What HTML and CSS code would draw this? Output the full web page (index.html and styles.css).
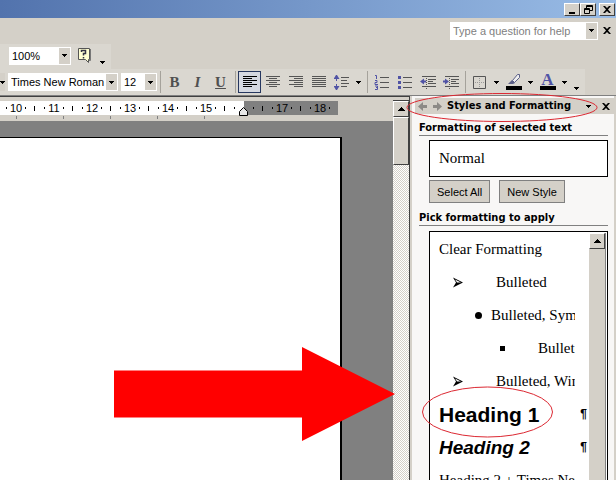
FILE: index.html
```html
<!DOCTYPE html>
<html lang="en">
<head>
<meta charset="utf-8">
<title>Styles and Formatting</title>
<link rel="stylesheet" href="styles.css">
</head>
<body>
<svg class="defs" aria-hidden="true">
  <symbol id="down" viewBox="0 0 5 3"><path d="M0 0h5v1h-1v1h-1v1h-1v-1h-1v-1h-1z"/></symbol>
  <symbol id="up" viewBox="0 0 7 4"><path d="M3 0h1v1h1v1h1v1h1v1H0V3h1V2h1V1h1z"/></symbol>
  <symbol id="close" viewBox="0 0 8 7"><path d="M0 0h2l2 2 2-2h2L5 3.500l3 3.500H6L4 5 2 7H0l3-3.500z"/></symbol>
  <symbol id="arrowhead" viewBox="0 0 10 10"><path d="M0 0l10 5L0 10l3-5z"/><path d="M2 2l6 3H4z" fill="#fff"/></symbol>
</svg>

<header class="titlebar">
  <button class="winbtn" aria-label="Minimize"><svg width="9" height="8"><path d="M1 6h6v2H1z"/></svg></button>
  <button class="winbtn" aria-label="Restore"><svg width="9" height="9" fill="none" stroke="#000"><path d="M2.500 3V.5h6v5H6M2 1.500h7M.5 3.500h5v5h-5zM0 4.500h6"/></svg></button>
  <button class="winbtn last" aria-label="Close"><svg width="8" height="7"><use href="#close"/></svg></button>
</header>

<div class="menubar">
  <div class="combo question"><input type="text" aria-label="Help question" placeholder="Type a question for help"><span class="drop"><svg width="5" height="3"><use href="#down"/></svg></span></div>
  <button class="plain" aria-label="Close document"><svg width="8" height="7"><use href="#close"/></svg></button>
</div>

<div class="bar standard">
  <div class="combo zoom"><select aria-label="Zoom"><option>100%</option></select><span class="drop"><svg width="5" height="3"><use href="#down"/></svg></span></div>
  <button class="tool" aria-label="Help"><svg width="15" height="17"><path d="M1.500 1.500h11v11h-1v3l-3-3h-7z" fill="#ffffd2" stroke="#555"/><path d="M13.500 2v11.500H12" fill="none" stroke="#777"/><path d="M4.500 5V3.500h4v3h-2v2M6.500 10v1.500" fill="none" stroke="#334" stroke-width="1.500"/></svg></button>
  <button class="options" aria-label="Toolbar options"><svg width="5" height="3"><use href="#down"/></svg></button>
</div>

<div class="bar format">
  <button class="edge" aria-label="Style"><svg width="5" height="3"><use href="#down"/></svg></button>
  <div class="combo font"><select aria-label="Font"><option>Times New Roman</option></select><span class="drop"><svg width="5" height="3"><use href="#down"/></svg></span></div>
  <div class="combo size"><select aria-label="Font size"><option>12</option></select><span class="drop"><svg width="5" height="3"><use href="#down"/></svg></span></div>
  <i class="sep"></i>
  <button class="tool letter">B</button>
  <button class="tool letter italic">I</button>
  <button class="tool letter under">U</button>
  <i class="sep"></i>
  <button class="tool active" aria-label="Align left"><svg width="14" height="12" stroke="#000"><path d="M0 .5h14M0 2.500h9M0 4.500h14M0 6.500h9M0 8.500h14M0 10.500h9"/></svg></button>
  <button class="tool" aria-label="Center"><svg width="14" height="12" stroke="#555"><path d="M0 .5h14M3 2.500h8M0 4.500h14M3 6.500h8M0 8.500h14M3 10.500h8"/></svg></button>
  <button class="tool" aria-label="Align right"><svg width="14" height="12" stroke="#555"><path d="M0 .5h14M5 2.500h9M0 4.500h14M5 6.500h9M0 8.500h14M5 10.500h9"/></svg></button>
  <button class="tool" aria-label="Justify"><svg width="14" height="12" stroke="#555"><path d="M0 .5h14M0 2.500h14M0 4.500h14M0 6.500h14M0 8.500h14M0 10.500h14"/></svg></button>
  <button class="tool" aria-label="Line spacing"><svg width="16" height="15"><path d="M2 0h1l2.500 4h-6zM2 15h1l2.500-4h-6z" fill="#5053a5"/><path d="M2.500 3v3M2.500 9v3" stroke="#5053a5"/><path d="M7 2.500h8M7 5.500h6M7 8.500h8M7 11.500h6" stroke="#555"/></svg></button>
  <button class="arrow" aria-label="Line spacing options"><svg width="5" height="3"><use href="#down"/></svg></button>
  <i class="sep"></i>
  <button class="tool" aria-label="Numbering"><svg width="16" height="15" fill="none"><path d="M1 .5h1.500V4M1 5.500h2v2H1v2h3M1 11h2.500v3.500H1M2 12.500h1" stroke="#5053a5"/><path d="M6 2.500h9M6 7.500h9M6 12.500h9" stroke="#555"/></svg></button>
  <button class="tool" aria-label="Bullets"><svg width="16" height="15"><path d="M1 1h3v3H1zM1 6h3v3H1zM1 11h3v3H1z" fill="#5053a5"/><path d="M6 2.500h9M6 7.500h9M6 12.500h9" stroke="#555"/></svg></button>
  <button class="tool" aria-label="Decrease indent"><svg width="16" height="13"><path d="M0 5.500l4-3v2h2v2H4v2z" fill="#5053a5"/><path d="M2 .5h14M8 3.500h8M8 5.500h5M8 7.500h8M2 10.500h14" stroke="#555"/><path d="M6.500 0v13" stroke="#555" stroke-dasharray="1"/></svg></button>
  <button class="tool" aria-label="Increase indent"><svg width="16" height="13"><path d="M6 5.500l-4-3v2H0v2h2v2z" fill="#5053a5"/><path d="M2 .5h14M8 3.500h8M8 5.500h5M8 7.500h8M2 10.500h14" stroke="#555"/><path d="M6.500 0v13" stroke="#555" stroke-dasharray="1"/></svg></button>
  <i class="sep"></i>
  <button class="tool" aria-label="Border"><svg width="13" height="13" fill="none"><path d="M.5.5h12v12H.5z" stroke="#555"/><path d="M6.500 2v9M2 6.500h9" stroke="#999" stroke-dasharray="1"/></svg></button>
  <button class="arrow" aria-label="Border options"><svg width="5" height="3"><use href="#down"/></svg></button>
  <button class="tool" aria-label="Highlight"><svg width="16" height="16"><path d="M0 12h16v4H0z"/><path d="M6.500 6.500l5-6h2v3l-5 5z" fill="#eee" stroke="#5c6088"/><path d="M6 6l3 3-2 1H2z" fill="#5c6088"/></svg></button>
  <button class="arrow" aria-label="Highlight options"><svg width="5" height="3"><use href="#down"/></svg></button>
  <button class="tool fontcolor" aria-label="Font color">A</button>
  <button class="arrow" aria-label="Font color options"><svg width="5" height="3"><use href="#down"/></svg></button>
  <button class="options" aria-label="Toolbar options"><svg width="5" height="3"><use href="#down"/></svg></button>
</div>

<div class="workspace">
  <main class="document">
    <div class="canvas">
      <div class="ruler">
        <div class="scale">
          <div class="inside"><span class="unit">10</span><span class="unit">11</span><span class="unit">12</span><span class="unit">13</span><span class="unit">14</span><span class="unit">15</span><span class="unit half"></span></div>
          <div class="outside"><span class="unit half"></span><span class="unit">17</span><span class="unit">18</span></div>
          <svg class="marker" width="11" height="9"><path d="M1.500 8.500v-4l4-4 4 4v4z" fill="#e8e8e8" stroke="#000"/></svg>
        </div>
        <div class="tabs"></div>
      </div>
      <div class="desk"><div class="sheet"></div></div>
    </div>
    <div class="scrollbar">
      <div class="split"></div>
      <button class="scrollbtn" aria-label="Scroll up"><svg width="7" height="4"><use href="#up"/></svg></button>
      <div class="thumb"></div>
    </div>
  </main>

  <aside class="pane">
    <div class="panehead">
      <button class="nav" aria-label="Back"><svg width="9" height="9"><path d="M0 4.500L5 0v3h4v3H5v3z"/></svg></button>
      <button class="nav" aria-label="Forward"><svg width="9" height="9"><path d="M9 4.500L4 0v3H0v3h4v3z"/></svg></button>
      <h1>Styles and Formatting</h1>
      <button class="plain" aria-label="Other task panes"><svg width="5" height="3"><use href="#down"/></svg></button>
      <button class="plain" aria-label="Close pane"><svg width="8" height="7"><use href="#close"/></svg></button>
    </div>
    <div class="panebody">
      <h2>Formatting of selected text</h2>
      <div class="current">Normal</div>
      <div class="actions"><button>Select All</button><button>New Style</button></div>
      <h2>Pick formatting to apply</h2>
      <div class="listbox">
        <ul>
          <li><span class="name">Clear Formatting</span></li>
          <li><span class="name bulleted"><svg width="10" height="11"><use href="#arrowhead"/></svg>Bulleted</span></li>
          <li><span class="name symbol"><svg width="7" height="7"><circle cx="3.500" cy="3.500" r="3.500"/></svg>Bulleted, Symbol</span></li>
          <li><span class="name square"><svg width="5" height="5"><path d="M0 0h5v5H0z"/></svg>Bulleted, Symbol</span></li>
          <li><span class="name bulleted"><svg width="10" height="11"><use href="#arrowhead"/></svg>Bulleted, Wingdings</span></li>
          <li><span class="name heading1">Heading 1</span><span class="mark">¶</span></li>
          <li><span class="name heading2">Heading 2</span><span class="mark">¶</span></li>
          <li><span class="name">Heading 2 + Times New Roman</span></li>
        </ul>
        <div class="listscroll"><button class="scrollbtn" aria-label="Scroll list up"><svg width="7" height="4"><use href="#up"/></svg></button></div>
      </div>
    </div>
  </aside>
</div>

<svg class="callouts" width="616" height="480" aria-hidden="true">
  <path d="M114 370.500h188V347l93 47-93 47v-23.500H114z" fill="#f00"/>
  <g fill="none" stroke="#dc2832"><ellipse cx="502" cy="107.500" rx="95" ry="14"/><ellipse cx="487.500" cy="412" rx="65" ry="25"/></g>
</svg>
</body>
</html>
```
FILE: styles.css
```css
* { box-sizing: border-box; }
body {
  margin: 0;
  height: 100vh;
  overflow: hidden;
  display: flex;
  flex-direction: column;
  background: #d4d0c8;
  color: #000;
  font: 11px/14px "Liberation Sans", Arial, sans-serif;
}
svg { display: block; flex: none; }
.defs { position: absolute; width: 0; height: 0; }
button, input, select { font: inherit; color: inherit; margin: 0; padding: 0; border: 0; background: none; border-radius: 0; }
button { display: flex; align-items: center; justify-content: center; flex: none; }

.titlebar {
  flex: none;
  height: 18px;
  display: flex;
  justify-content: flex-end;
  align-items: flex-end;
  padding: 0 1px 2px 0;
  background: linear-gradient(90deg, #5273ad, #99bce6);
}
.winbtn {
  width: 16px;
  height: 13px;
  background: #d4d0c8;
  border: 1px solid;
  border-color: #fff #404040 #404040 #fff;
}
.winbtn.last { margin-left: 3px; }

.menubar { flex: none; height: 26px; display: flex; justify-content: flex-end; align-items: center; padding: 0 1px 1px 0; }
.plain { width: 17px; height: 14px; }
.combo { position: relative; display: flex; height: 18px; background: #fff; flex: none; }
.combo input, .combo select { flex: 1; min-width: 0; appearance: none; padding: 0 3px; outline: 0; }
.drop {
  position: absolute;
  inset: 1px 1px 1px auto;
  width: 11px;
  display: flex;
  align-items: center;
  justify-content: center;
  background: #d4d0c8;
  pointer-events: none;
}
.question { width: 148px; }
.question input::placeholder { color: #808080; opacity: 1; }

.bar { flex: none; display: flex; align-items: center; align-self: flex-start; background: #dad7d0; }
.standard { height: 25px; padding: 0 2px 2px 9px; }
.zoom { width: 62px; margin-right: 2px; }
.format { height: 26px; padding-right: 2px; }
.edge { width: 5px; height: 18px; margin-right: 3px; background: #d4d0c8; overflow: hidden; }
.font { width: 110px; margin-right: 3px; }
.size { width: 36px; }
.tool { width: 23px; height: 22px; }
.active { border: 1px solid #26375f; background: #d5d8e0; }
.arrow { width: 11px; height: 22px; }
.options { width: 13px; height: 22px; align-items: flex-end; padding-bottom: 3px; }
.sep { flex: none; width: 1px; height: 22px; margin: 0 2px 0 3px; background: #a5a29b; }
.letter { font: bold 15px/20px "Liberation Serif", serif; color: #505050; }
.italic { font-style: italic; }
.under { text-decoration: underline; }
.fontcolor { align-items: flex-start; font: bold 17px/17px "Liberation Serif", serif; color: #5053a5; background: linear-gradient(#000, #000) 4px 15px / 16px 4px no-repeat; }

.workspace { flex: 1; min-height: 0; display: flex; border-top: 1px solid #808080; }
.document { flex: 1; min-width: 0; display: flex; border-top: 1px solid #404040; }
.canvas { flex: 1; min-width: 0; display: flex; flex-direction: column; }
.ruler { flex: none; height: 24px; padding-top: 4px; }
.scale { position: relative; display: flex; height: 14px; }
.inside { display: flex; width: 244px; overflow: hidden; background: #fff; }
.inside .unit:first-child { margin-left: -3px; }
.outside { display: flex; width: 94px; overflow: hidden; background: #808080; }
.unit {
  flex: none;
  width: 38px;
  text-align: center;
  background:
    linear-gradient(#000, #000) 9px 6px / 1px 2px no-repeat,
    linear-gradient(#000, #000) 28px 6px / 1px 2px no-repeat,
    linear-gradient(#000, #000) 37px 5px / 1px 5px no-repeat;
}
.half { width: 19px; }
.outside .half { background-position: 9px 6px, 28px 6px, 18px 5px; }
.marker { position: absolute; left: 238px; bottom: -1px; }
.tabs { height: 3px; margin-top: 1px; background: repeating-linear-gradient(90deg, transparent 0 16px, #808080 16px 17px, transparent 17px 47px); width: 244px; }
.desk { flex: 1; padding: 16px 51px 0 0; background: #808080; }
.sheet { height: 100%; background: #fff; border: solid #000; border-width: 1px 2px 0 0; }
.scrollbar { width: 17px; flex: none; border-right: 1px solid #404040; background: repeating-conic-gradient(#fff 0 25%, #d4d0c8 0 50%) 0 0 / 2px 2px; }
.split { height: 4px; background: #d4d0c8; border-bottom: 1px solid #404040; }
.scrollbtn, .thumb { width: 100%; background: #d4d0c8; border: 1px solid; border-color: #fff #404040 #404040 #fff; }
.scrollbtn { height: 16px; }
.thumb { height: 48px; }

.pane {
  flex: none;
  width: 206px;
  display: flex;
  flex-direction: column;
  border-left: 2px solid #d4d0c8;
  border-right: 2px solid #d4d0c8;
  background: #f8f7f6;
}
.panehead { flex: none; height: 16px; margin: 2px 0 0 3px; display: flex; align-items: center; background: #d4d0c8; }
.panehead h1, h2 { font: bold 11px/14px "DejaVu Sans Condensed", "DejaVu Sans", sans-serif; white-space: nowrap; }
.panehead h1 { flex: 1; margin: 0 0 0 2px; }
.nav { width: 15px; height: 14px; fill: #8c8a86; }
.panebody { flex: 1; min-height: 0; display: flex; flex-direction: column; padding: 7px 6px 0 7px; }
h2 { flex: none; margin: 0; border-bottom: 1px solid #808080; }
.current { flex: none; height: 37px; margin: 4px 0 3px 10px; padding-left: 9px; border: 1px solid #000; background: #fff; font: 15px/35px "Liberation Serif", serif; }
.actions { flex: none; display: flex; gap: 9px; margin: 0 0 8px 10px; }
.actions button { height: 23px; padding: 0 7px; background: #d4d0c8; border: 1px solid #808080; }
.listbox { flex: 1; min-height: 0; display: flex; margin: 5px 0 0 10px; border: 1px solid #000; border-bottom: 0; background: #fff; overflow: hidden; }
ul { flex: 1; min-width: 0; list-style: none; margin: 1px 0 0; padding: 0 2px 0 9px; }
li { display: flex; align-items: center; height: 33px; font: 15px/33px "Liberation Serif", serif; white-space: nowrap; }
.name { display: flex; align-items: center; width: 136px; overflow: hidden; }
.bulleted { padding-left: 14px; gap: 33px; }
.symbol { padding-left: 36px; gap: 9px; }
.square { padding-left: 61px; gap: 33px; }
.heading1 { font: bold 21px/33px "Liberation Sans", sans-serif; }
.heading2 { font: italic bold 19px/33px "Liberation Sans", sans-serif; }
.mark { margin-left: auto; font: bold 12px/33px "Liberation Sans", sans-serif; }
.listscroll { width: 17px; flex: none; margin: 1px 1px 0 0; background: #d4d0c8; border-right: 1px solid #808080; }
.callouts { position: absolute; top: 0; left: 0; pointer-events: none; }
```
